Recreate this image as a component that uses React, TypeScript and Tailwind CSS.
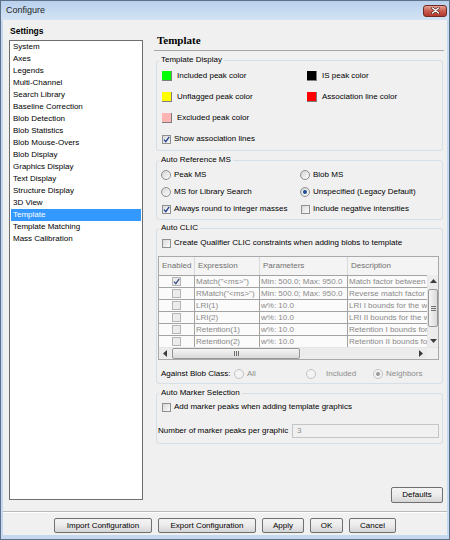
import React from "react";

const settings = [
  "System",
  "Axes",
  "Legends",
  "Multi-Channel",
  "Search Library",
  "Baseline Correction",
  "Blob Detection",
  "Blob Statistics",
  "Blob Mouse-Overs",
  "Blob Display",
  "Graphics Display",
  "Text Display",
  "Structure Display",
  "3D View",
  "Template",
  "Template Matching",
  "Mass Calibration",
];

const clicRows = [
  { on: true, expr: 'Match("<ms>")', params: "Min: 500.0; Max: 950.0", desc: "Match factor between reference and peak" },
  { on: false, expr: 'RMatch("<ms>")', params: "Min: 500.0; Max: 950.0", desc: "Reverse match factor between reference" },
  { on: false, expr: "LRI(1)", params: "w%: 10.0", desc: "LRI I bounds for the window" },
  { on: false, expr: "LRI(2)", params: "w%: 10.0", desc: "LRI II bounds for the window" },
  { on: false, expr: "Retention(1)", params: "w%: 10.0", desc: "Retention I bounds for the window" },
  { on: false, expr: "Retention(2)", params: "w%: 10.0", desc: "Retention II bounds for the window" },
];

function CheckBox({ checked, disabled }: { checked?: boolean; disabled?: boolean }) {
  return (
    <span
      className={
        disabled
          ? "flex h-[9px] w-[9px] shrink-0 items-center justify-center border border-[#b4b4b4] bg-[#ececec]"
          : "flex h-[9px] w-[9px] shrink-0 items-center justify-center border border-[#8e8f8f] bg-gradient-to-br from-[#d9d9d9] to-[#fbfbfb]"
      }
    >
      {checked && (
        <svg width="7" height="7" viewBox="0 0 7 7">
          <path d="M1 3.6 L2.8 5.6 L6.2 0.8" stroke={disabled ? "#3a4f86" : "#22408c"} strokeWidth="1.3" fill="none" />
        </svg>
      )}
    </span>
  );
}

function Radio({ checked, disabled }: { checked?: boolean; disabled?: boolean }) {
  return (
    <span
      className={
        disabled
          ? "flex h-[10px] w-[10px] shrink-0 items-center justify-center rounded-full border border-[#c2c2c2] bg-[#f3f3f3]"
          : "flex h-[10px] w-[10px] shrink-0 items-center justify-center rounded-full border border-[#8e8f8f] bg-gradient-to-br from-[#d4d4d4] to-[#fdfdfd]"
      }
    >
      {checked && (
        <span className={disabled ? "h-[4px] w-[4px] rounded-full bg-[#9a9a9a]" : "h-[4px] w-[4px] rounded-full bg-[#1f4f94]"} />
      )}
    </span>
  );
}

function Swatch({ color, label }: { color: string; label: string }) {
  return (
    <div className="flex h-[14px] items-center gap-[5px]">
      <span className={`h-[10px] w-[10px] shrink-0 border-b border-r border-[#7d7d7d] ${color}`} />
      <span>{label}</span>
    </div>
  );
}

function CheckRow({ checked, label }: { checked?: boolean; label: string }) {
  return (
    <div className="flex h-[14px] items-center gap-[3px]">
      <CheckBox checked={checked} />
      <span>{label}</span>
    </div>
  );
}

function RadioRow({ checked, label }: { checked?: boolean; label: string }) {
  return (
    <div className="flex h-[14px] items-center gap-[3px] -ml-[1px]">
      <Radio checked={checked} />
      <span>{label}</span>
    </div>
  );
}

function Group({ title, className, children }: { title: string; className: string; children: React.ReactNode }) {
  return (
    <fieldset className={`ml-[2px] w-[287px] rounded-[3px] border border-[#d5dfe5] px-[1px] ${className}`}>
      <legend className="ml-[1px] px-[2px] leading-[12px]">{title}</legend>
      {children}
    </fieldset>
  );
}

function Arrow({ dir }: { dir: "up" | "down" | "left" | "right" }) {
  const pts = {
    up: "0,4 3.5,0 7,4",
    down: "0,0 3.5,4 7,0",
    left: "4,0 0,3.5 4,7",
    right: "0,0 4,3.5 0,7",
  }[dir];
  const vertical = dir === "up" || dir === "down";
  return (
    <svg width={vertical ? 7 : 4} height={vertical ? 4 : 7} viewBox={vertical ? "0 0 7 4" : "0 0 4 7"}>
      <polygon points={pts} fill="#3c3c3c" />
    </svg>
  );
}

function Button({ className, children }: { className: string; children: React.ReactNode }) {
  return (
    <button
      className={`flex h-[15px] items-center justify-center rounded-[2px] border border-[#707070] bg-gradient-to-b from-[#f4f4f4] via-[#ebebeb] to-[#d5d5d5] text-[8px] leading-none text-black ${className}`}
    >
      {children}
    </button>
  );
}

function ClicTable() {
  return (
    <div className="mt-[6px] flex h-[104px] w-[281px] flex-col border border-[#a9a9a9] bg-[#fbfbfb]">
      <div className="flex h-[18px] shrink-0 bg-[#f4f4f4] leading-[18px] text-[#707070]">
        <div className="w-[36px] shrink-0 border-r border-[#d9d9d9] pl-[3px]">Enabled</div>
        <div className="w-[65px] shrink-0 border-r border-[#d9d9d9] pl-[3px]">Expression</div>
        <div className="w-[88px] shrink-0 border-r border-[#d9d9d9] pl-[3px]">Parameters</div>
        <div className="flex-1 pl-[3px]">Description</div>
      </div>
      <div className="flex h-[72px] shrink-0">
        <div className="flex-1 overflow-hidden">
          {clicRows.map((r) => (
            <div key={r.expr} className="flex h-[12px] border-t border-[#a3a3a3] leading-[11px] text-[#8a8a8a]">
              <div className="flex w-[36px] shrink-0 items-center justify-center border-r border-[#a3a3a3]">
                <CheckBox checked={r.on} disabled />
              </div>
              <div className="w-[65px] shrink-0 overflow-hidden whitespace-nowrap border-r border-[#a3a3a3] pl-[1px]">{r.expr}</div>
              <div className="w-[88px] shrink-0 overflow-hidden whitespace-nowrap border-r border-[#a3a3a3] pl-[1px]">{r.params}</div>
              <div className="w-[120px] shrink-0 overflow-hidden whitespace-nowrap pl-[1px]">{r.desc}</div>
            </div>
          ))}
        </div>
        <div className="flex w-[11px] shrink-0 flex-col border-l border-[#e6e6e6] bg-[#ececec]">
          <div className="flex h-[12px] items-center justify-center">
            <Arrow dir="up" />
          </div>
          <div className="flex-1">
            <div className="mt-[2px] flex h-[38px] flex-col items-center justify-center gap-[1px] rounded-[2px] border border-[#979797] bg-gradient-to-r from-[#f5f5f5] to-[#dadada]">
              <span className="h-px w-[5px] bg-[#6f6f6f]" />
              <span className="h-px w-[5px] bg-[#6f6f6f]" />
              <span className="h-px w-[5px] bg-[#6f6f6f]" />
            </div>
          </div>
          <div className="flex h-[12px] items-center justify-center">
            <Arrow dir="down" />
          </div>
        </div>
      </div>
      <div className="flex h-[12px] shrink-0 border-t border-[#e6e6e6] bg-[#ececec]">
        <div className="flex w-[12px] items-center justify-center">
          <Arrow dir="left" />
        </div>
        <div className="flex-1">
          <div className="ml-[1px] flex h-[11px] w-[128px] items-center justify-center gap-[1px] rounded-[2px] border border-[#979797] bg-gradient-to-b from-[#f5f5f5] to-[#dadada]">
            <span className="h-[5px] w-px bg-[#6f6f6f]" />
            <span className="h-[5px] w-px bg-[#6f6f6f]" />
            <span className="h-[5px] w-px bg-[#6f6f6f]" />
          </div>
        </div>
        <div className="flex w-[12px] items-center justify-center">
          <Arrow dir="right" />
        </div>
        <div className="w-[11px] bg-[#f0f0f0]" />
      </div>
    </div>
  );
}

export default function App() {
  return (
    <div className="flex h-[540px] w-[450px] flex-col border border-[#5d7189] bg-[#c4d8ef] font-['Liberation_Sans',Arial,sans-serif] text-[8px] text-black">
      {/* title bar */}
      <div className="flex h-[19px] shrink-0 items-center justify-between bg-gradient-to-b from-[#b9d1ed] to-[#d3e3f5] pl-[5px] pr-[2px]">
        <span className="text-[9px] text-[#1e1e1e]">Configure</span>
        <div className="flex h-[12px] w-[24px] items-center justify-center rounded-[3px] border border-[#6e2c25] bg-gradient-to-b from-[#e3a294] via-[#c95c4f] to-[#b3392c]">
          <svg width="9" height="7" viewBox="0 0 9 7">
            <path d="M1.5 1 L7.5 6 M7.5 1 L1.5 6" stroke="#4a1a14" strokeWidth="2.6" strokeLinecap="round" />
            <path d="M1.5 1 L7.5 6 M7.5 1 L1.5 6" stroke="#ffffff" strokeWidth="1.5" strokeLinecap="round" />
          </svg>
        </div>
      </div>

      {/* client area */}
      <div className="mx-[2px] flex flex-1 flex-col bg-[#f0f0f0]">
        <div className="flex h-[491px] shrink-0">
          {/* settings list */}
          <div className="flex flex-col pl-[6px]">
            <div className="ml-[1px] mt-[5px] text-[8.5px] font-bold leading-[12px]">Settings</div>
            <div className="mt-[3px] h-[460px] w-[134px] border border-[#6e6e6e] bg-white">
              {settings.map((s) =>
                s === "Template" ? (
                  <div key={s} className="mx-[1px] h-[12px] bg-[#3399ff] pl-[2px] leading-[12px] text-white">
                    {s}
                  </div>
                ) : (
                  <div key={s} className="h-[12px] pl-[3px] leading-[12px]">
                    {s}
                  </div>
                )
              )}
            </div>
          </div>

          {/* template page */}
          <div className="ml-[11px] flex w-[290px] flex-col">
            <div className="mt-[13px] h-[14px] pl-[3px] font-['Liberation_Serif',serif] text-[11px] font-bold leading-[14px]">
              Template
            </div>
            <div className="mt-[3px] h-px bg-[#a5a5a5]" />

            <Group title="Template Display" className="mt-[3px] h-[97px]">
              <div className="grid grid-cols-[145px_1fr] gap-y-[7px] pl-[4px] pt-[3px]">
                <Swatch color="bg-[#00ff00]" label="Included peak color" />
                <Swatch color="bg-[#000000]" label="IS peak color" />
                <Swatch color="bg-[#ffff00]" label="Unflagged peak color" />
                <Swatch color="bg-[#ff0000]" label="Association line color" />
                <Swatch color="bg-[#ffb3b3]" label="Excluded peak color" />
                <div />
                <CheckRow checked label="Show association lines" />
              </div>
            </Group>

            <Group title="Auto Reference MS" className="mt-[3px] h-[66px]">
              <div className="grid grid-cols-[139px_1fr] gap-y-[3px] pl-[4px] pt-[2px]">
                <RadioRow label="Peak MS" />
                <RadioRow label="Blob MS" />
                <RadioRow label="MS for Library Search" />
                <RadioRow checked label="Unspecified (Legacy Default)" />
                <CheckRow checked label="Always round to integer masses" />
                <CheckRow label="Include negative intensities" />
              </div>
            </Group>

            <Group title="Auto CLIC" className="mt-[2px] h-[162px]">
              <div className="pl-[4px] pt-[2px]">
                <CheckRow label="Create Qualifier CLIC constraints when adding blobs to template" />
              </div>
              <ClicTable />
              <div className="mt-[7px] flex h-[14px] items-center pl-[3px]">
                <span className="w-[73px] shrink-0">Against Blob Class:</span>
                <div className="flex w-[72px] shrink-0 items-center gap-[3px] text-[#8d8d8d]">
                  <Radio disabled />
                  <span>All</span>
                </div>
                <div className="flex w-[67px] shrink-0 items-center gap-[10px] text-[#8d8d8d]">
                  <Radio disabled />
                  <span>Included</span>
                </div>
                <div className="flex items-center gap-[3px] text-[#8d8d8d]">
                  <Radio checked disabled />
                  <span>Neighbors</span>
                </div>
              </div>
            </Group>

            <Group title="Auto Marker Selection" className="mt-[3px] h-[57px]">
              <div className="pl-[4px] pt-[1px]">
                <CheckRow label="Add marker peaks when adding template graphics" />
              </div>
              <div className="mt-[10px] flex h-[14px] items-center">
                <span className="w-[134px] shrink-0">Number of marker peaks per graphic</span>
                <div className="h-[14px] w-[147px] border border-[#c3c6c9] bg-[#f0f0f0] pl-[4px] leading-[12px] text-[#8d8d8d]">
                  3
                </div>
              </div>
            </Group>

            <div className="flex-1" />
            <div className="mb-[8px] mr-[1px] flex justify-end">
              <Button className="h-[16px] w-[52px]">Defaults</Button>
            </div>
          </div>
        </div>

        <div className="h-px bg-[#b9b9b9]" />
        <div className="h-px bg-white" />

        <div className="mt-[5px] flex justify-center gap-[6px]">
          <Button className="w-[98px]">Import Configuration</Button>
          <Button className="w-[98px]">Export Configuration</Button>
          <Button className="w-[42px]">Apply</Button>
          <Button className="w-[33px]">OK</Button>
          <Button className="w-[47px]">Cancel</Button>
        </div>
      </div>
      <div className="h-[4px] shrink-0" />
    </div>
  );
}
